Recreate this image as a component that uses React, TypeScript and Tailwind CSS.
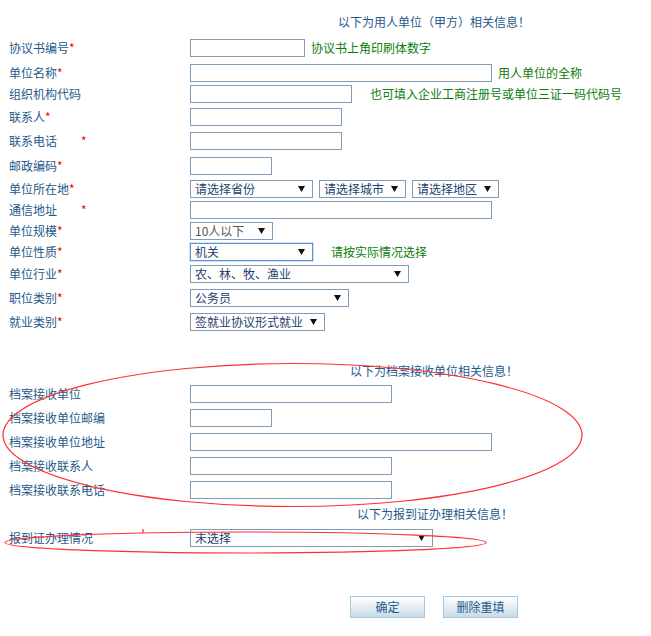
import React from "react";

const FONT = { fontFamily: '"Noto Sans CJK SC", "Noto Sans", sans-serif' };

function Arrow() {
  return (
    <svg width="7" height="6" viewBox="0 0 7 6" className="shrink-0">
      <polygon points="0,0 7,0 3.5,6" fill="#111" />
    </svg>
  );
}

function Label({ text, star, gap }: { text: string; star?: boolean; gap?: boolean }) {
  return (
    <div className="w-[190px] shrink-0 pl-[9px] flex items-center text-[12px] leading-[16px] text-[#1f5a8a]">
      <span>{text}</span>
      {star && <span className={`text-[#ff0000] ${gap ? "ml-[24px]" : ""}`}>*</span>}
    </div>
  );
}

function Input({ w }: { w: string }) {
  return <div className={`${w} h-[18px] border border-[#7f9db9] bg-white shrink-0`} />;
}

function Select({ w, text, focus, gray }: { w: string; text: string; focus?: boolean; gray?: boolean }) {
  return (
    <div
      className={`${w} h-[18px] shrink-0 flex items-center justify-between pl-[4px] pr-[7px] bg-white border ${
        focus ? "border-[#5b8fd8] shadow-[0_0_0_1px_#d3e3f7]" : "border-[#7f9db9]"
      }`}
    >
      <span className={`text-[12px] leading-[16px] whitespace-nowrap ${gray ? "text-[#555]" : "text-[#23406b]"}`}>{text}</span>
      <Arrow />
    </div>
  );
}

function Hint({ text, ml }: { text: string; ml: string }) {
  return <span className={`${ml} text-[12px] leading-[16px] text-[#0a7d0a] whitespace-nowrap`}>{text}</span>;
}

function Row({ mt, children }: { mt: string; children: React.ReactNode }) {
  return <div className={`${mt} h-[18px] flex items-center`}>{children}</div>;
}

function Header({ text, mt, pl }: { text: string; mt: string; pl: string }) {
  return <div className={`${mt} ${pl} h-[16px] text-[12px] leading-[16px] text-[#1f5a8a] whitespace-nowrap`}>{text}</div>;
}

function Button({ text }: { text: string }) {
  return (
    <div className="w-[75px] h-[22px] flex items-center justify-center border border-[#a9c9dd] bg-gradient-to-b from-white to-[#c8dbe8] text-[12px] text-[#1f5a8a]">
      {text}
    </div>
  );
}

export default function App() {
  return (
    <div className="relative w-[651px] h-[636px] bg-white overflow-hidden pt-[14px]" style={FONT}>
      <Header text="以下为用人单位（甲方）相关信息！" mt="mt-0" pl="pl-[338px]" />

      <Row mt="mt-[9px]">
        <Label text="协议书编号" star />
        <Input w="w-[115px]" />
        <Hint text="协议书上角印刷体数字" ml="ml-[6px]" />
      </Row>
      <Row mt="mt-[7px]">
        <Label text="单位名称" star />
        <Input w="w-[302px]" />
        <Hint text="用人单位的全称" ml="ml-[6px]" />
      </Row>
      <Row mt="mt-[3px]">
        <Label text="组织机构代码" />
        <Input w="w-[162px]" />
        <Hint text="也可填入企业工商注册号或单位三证一码代码号" ml="ml-[18px]" />
      </Row>
      <Row mt="mt-[5px]">
        <Label text="联系人" star />
        <Input w="w-[152px]" />
      </Row>
      <Row mt="mt-[6px]">
        <Label text="联系电话" star gap />
        <Input w="w-[152px]" />
      </Row>
      <Row mt="mt-[7px]">
        <Label text="邮政编码" star />
        <Input w="w-[82px]" />
      </Row>
      <Row mt="mt-[5px]">
        <Label text="单位所在地" star />
        <Select w="w-[123px]" text="请选择省份" />
        <div className="ml-[6px]">
          <Select w="w-[87px]" text="请选择城市" />
        </div>
        <div className="ml-[6px]">
          <Select w="w-[87px]" text="请选择地区" />
        </div>
      </Row>
      <Row mt="mt-[3px]">
        <Label text="通信地址" star gap />
        <Input w="w-[302px]" />
      </Row>
      <Row mt="mt-[3px]">
        <Label text="单位规模" star />
        <Select w="w-[83px]" text="10人以下" gray />
      </Row>
      <Row mt="mt-[3px]">
        <Label text="单位性质" star />
        <Select w="w-[123px]" text="机关" focus />
        <Hint text="请按实际情况选择" ml="ml-[18px]" />
      </Row>
      <Row mt="mt-[4px]">
        <Label text="单位行业" star />
        <Select w="w-[219px]" text="农、林、牧、渔业" />
      </Row>
      <Row mt="mt-[6px]">
        <Label text="职位类别" star />
        <Select w="w-[159px]" text="公务员" />
      </Row>
      <Row mt="mt-[6px]">
        <Label text="就业类别" star />
        <Select w="w-[135px]" text="签就业协议形式就业" />
      </Row>

      <Header text="以下为档案接收单位相关信息！" mt="mt-[32px]" pl="pl-[350px]" />
      <Row mt="mt-[6px]">
        <Label text="档案接收单位" />
        <Input w="w-[202px]" />
      </Row>
      <Row mt="mt-[6px]">
        <Label text="档案接收单位邮编" />
        <Input w="w-[82px]" />
      </Row>
      <Row mt="mt-[6px]">
        <Label text="档案接收单位地址" />
        <Input w="w-[302px]" />
      </Row>
      <Row mt="mt-[6px]">
        <Label text="档案接收联系人" />
        <Input w="w-[202px]" />
      </Row>
      <Row mt="mt-[6px]">
        <Label text="档案接收联系电话" />
        <Input w="w-[202px]" />
      </Row>

      <Header text="以下为报到证办理相关信息！" mt="mt-[7px]" pl="pl-[357px]" />
      <Row mt="mt-[7px]">
        <Label text="报到证办理情况" />
        <Select w="w-[243px]" text="未选择" />
      </Row>

      <div className="mt-[49px] pl-[350px] flex gap-[18px]">
        <Button text="确定" />
        <Button text="删除重填" />
      </div>

      <svg className="absolute inset-0 pointer-events-none" width="651" height="636" viewBox="0 0 651 636">
        <ellipse cx="292.5" cy="435" rx="289.5" ry="71.5" fill="none" stroke="#ff3030" strokeWidth="1.2" />
        <ellipse cx="245.5" cy="542.5" rx="240.5" ry="10.5" fill="none" stroke="#ff3030" strokeWidth="1.2" />
        <line x1="143" y1="529" x2="143" y2="533" stroke="#ff5050" strokeWidth="1.5" />
      </svg>
    </div>
  );
}
